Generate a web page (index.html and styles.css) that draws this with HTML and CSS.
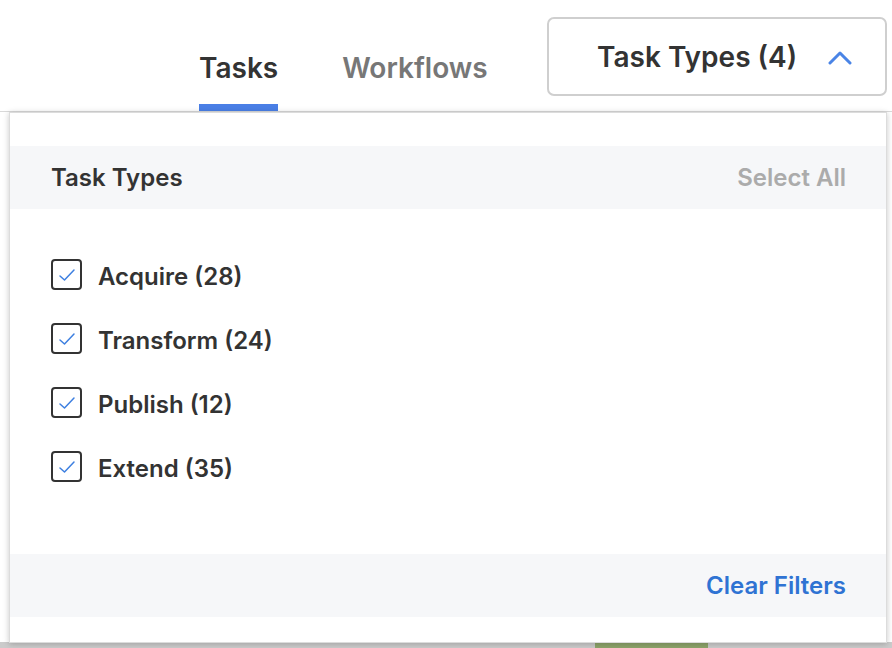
FILE: index.html
```html
<!DOCTYPE html>
<html lang="en">
<head>
    <meta charset="UTF-8">
    <meta name="viewport" content="width=device-width, initial-scale=1.0">
    <title>Task Types Filter</title>
    <link rel="stylesheet" href="styles.css">
</head>
<body>

<!-- Barra superior con pestañas y filtro -->
<div class="topbar">
    <div class="tabs">
        <a class="tab active" href="#">Tasks</a>
        <a class="tab" href="#">Workflows</a>
    </div>
    <button class="filter-btn">
        <span>Task Types (4)</span>
        <svg class="chevron" width="24" height="16" viewBox="0 0 24 16">
            <path d="M2 13 L12 3 L22 13" fill="none" stroke="#4a84e6" stroke-width="3" stroke-linecap="round" stroke-linejoin="round"/>
        </svg>
    </button>
</div>

<!-- Contenido de fondo -->
<div class="board">
    <div class="board-row">
        <div class="board-cell"></div>
    </div>
</div>

<!-- Panel desplegable -->
<div class="dropdown">
    <div class="dropdown-header">
        <h2>Task Types</h2>
        <a href="#" class="muted-link">Select All</a>
    </div>

    <ul class="option-list">
        <li class="option"><span class="check"><svg width="20" height="16" viewBox="0 0 20 16"><path d="M3 9 L7.5 13 L17 3" fill="none" stroke="#3d7fe0" stroke-width="1.5" stroke-linecap="round" stroke-linejoin="round"/></svg></span><span class="label">Acquire (28)</span></li>
        <li class="option"><span class="check"><svg width="20" height="16" viewBox="0 0 20 16"><path d="M3 9 L7.5 13 L17 3" fill="none" stroke="#3d7fe0" stroke-width="1.5" stroke-linecap="round" stroke-linejoin="round"/></svg></span><span class="label">Transform (24)</span></li>
        <li class="option"><span class="check"><svg width="20" height="16" viewBox="0 0 20 16"><path d="M3 9 L7.5 13 L17 3" fill="none" stroke="#3d7fe0" stroke-width="1.5" stroke-linecap="round" stroke-linejoin="round"/></svg></span><span class="label">Publish (12)</span></li>
        <li class="option"><span class="check"><svg width="20" height="16" viewBox="0 0 20 16"><path d="M3 9 L7.5 13 L17 3" fill="none" stroke="#3d7fe0" stroke-width="1.5" stroke-linecap="round" stroke-linejoin="round"/></svg></span><span class="label">Extend (35)</span></li>
    </ul>

    <div class="dropdown-footer">
        <a href="#" class="clear-link">Clear Filters</a>
    </div>
</div>

</body>
</html>
```

FILE: styles.css
```css
/* Reglas globales */
* {
    margin: 0;
    padding: 0;
    box-sizing: border-box;
}

body {
    font-family: Inter, 'Noto Sans', sans-serif;
    background-color: #fff;
    color: #333;
    position: relative;
    height: 648px;
    overflow: hidden;
}

a {
    text-decoration: none;
}

.topbar {
    height: 112px;
    display: flex;
    align-items: flex-start;
    padding-left: 199px;
    padding-right: 5px;
    border-bottom: 1px solid #d9d9d9;
}

.tabs {
    display: flex;
    gap: 64px;
    align-self: flex-end;
}

.tab {
    display: block;
    font-size: 28px;
    font-weight: 600;
    color: #777;
    padding-bottom: 20px;
    border-bottom: 7px solid transparent;
    line-height: 32px;
}

.tab.active {
    color: #333;
    border-bottom-color: #4a7fe6;
}

.filter-btn {
    margin-left: auto;
    margin-top: 17px;
    width: 340px;
    height: 79px;
    border: 2px solid #cfcfcf;
    border-radius: 7px;
    background: #fff;
    display: flex;
    align-items: center;
    padding-left: 48px;
    font-family: inherit;
    font-size: 28px;
    font-weight: 600;
    color: #333;
    cursor: pointer;
}

.filter-btn .chevron {
    margin-left: 31px;
    margin-top: 2px;
}

.board {
    height: 536px;
    display: flex;
    flex-direction: column;
    justify-content: flex-end;
}

.board-row {
    height: 6px;
    background: #cbcbcb;
    padding-left: 595px;
}

.board-cell {
    width: 113px;
    height: 100%;
    background: #8da46a;
}

.dropdown {
    position: absolute;
    top: 112px;
    left: 9px;
    width: 878px;
    height: 531px;
    background: #fff;
    border: 1px solid #dcdcdc;
    box-shadow: 0 1px 6px rgba(0, 0, 0, 0.22);
    padding-top: 33px;
    display: flex;
    flex-direction: column;
}

.dropdown-header {
    height: 63px;
    background: #f6f7f9;
    display: flex;
    align-items: center;
    justify-content: space-between;
    padding: 0 40px 0 41px;
}

.dropdown-header h2 {
    font-size: 24px;
    font-weight: 600;
    color: #333;
}

.muted-link {
    font-size: 24px;
    font-weight: 600;
    color: #ababab;
}

.option-list {
    list-style: none;
    padding: 50px 41px 0;
    display: flex;
    flex-direction: column;
    gap: 33px;
    flex: 1;
}

.option {
    display: flex;
    align-items: center;
    gap: 16px;
    height: 31px;
    font-size: 24px;
    font-weight: 600;
    color: #333;
}

.option .label {
    padding-top: 4px;
}

.check {
    width: 31px;
    height: 31px;
    flex-shrink: 0;
    border: 2px solid #333;
    border-radius: 4px;
    display: flex;
    align-items: center;
    justify-content: center;
}

.dropdown-footer {
    height: 63px;
    background: #f6f7f9;
    display: flex;
    align-items: center;
    justify-content: flex-end;
    padding-right: 40px;
    margin-bottom: 25px;
}

.clear-link {
    font-size: 24px;
    font-weight: 600;
    color: #2f73d3;
}
```
